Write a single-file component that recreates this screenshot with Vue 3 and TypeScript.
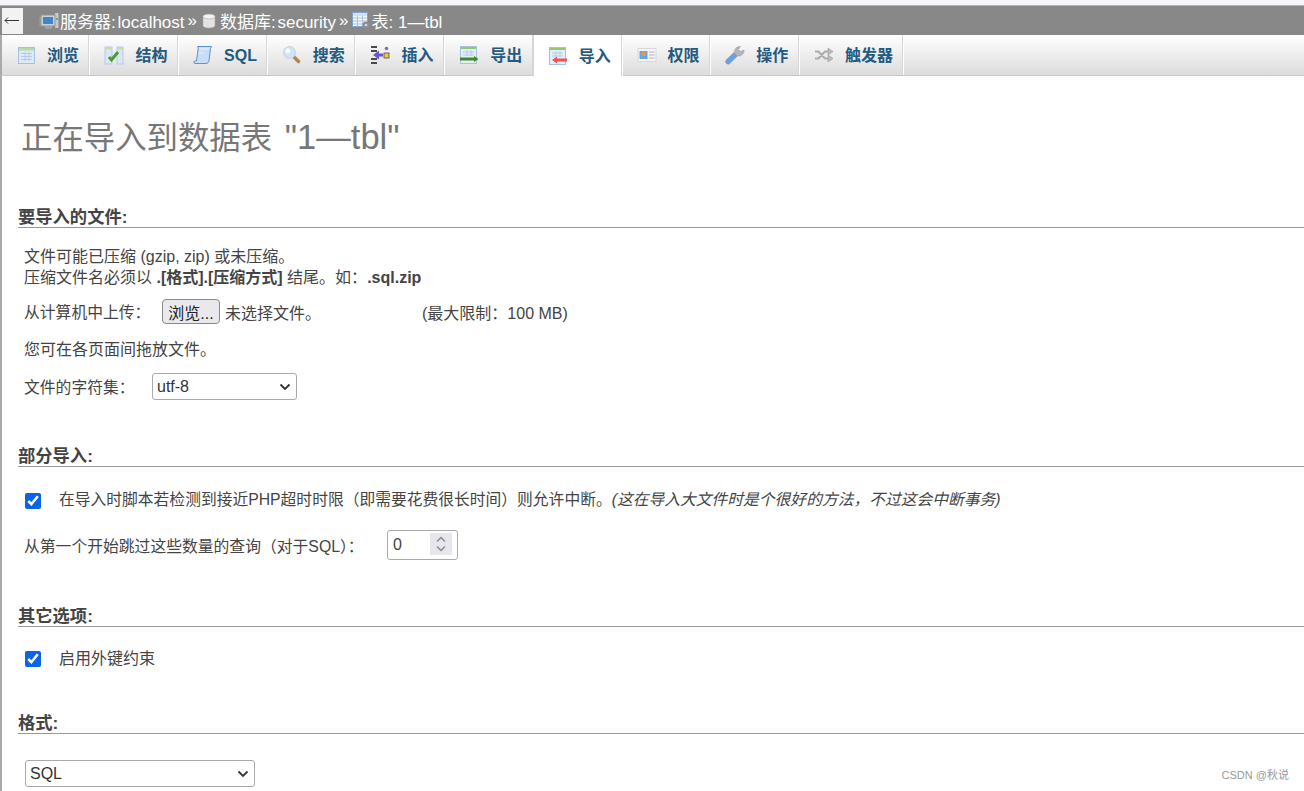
<script setup lang="ts">
interface Tab { label: string; icon: string; active?: boolean; wide?: boolean }
const tabs: Tab[] = [
  { label: '浏览', icon: 'browse' },
  { label: '结构', icon: 'structure' },
  { label: 'SQL', icon: 'sql' },
  { label: '搜索', icon: 'search' },
  { label: '插入', icon: 'insert' },
  { label: '导出', icon: 'export' },
  { label: '导入', icon: 'import', active: true },
  { label: '权限', icon: 'privs' },
  { label: '操作', icon: 'ops' },
  { label: '触发器', icon: 'triggers', wide: true },
]
</script>

<template>
  <div class="page">
    <div class="topbar">
      <button class="back" type="button" aria-label="back">
        <svg width="15" height="7" viewBox="0 0 15 7"><path d="M15 3.500H1M4 .5L1 3.500 4 6.500" fill="none" stroke="#333" /></svg>
      </button>
      <div class="crumbs">
        <svg class="c-ic server" width="20" height="18" viewBox="0 0 20 18">
          <rect x="0.5" y="5" width="3" height="9" fill="#9aa3ad" />
          <rect x="16" y="1" width="3.500" height="15" fill="#c4c8cc" />
          <rect x="2" y="3" width="14" height="11" fill="#c9d0d6" stroke="#8d959c" />
          <rect x="4" y="5" width="10" height="7" fill="#3f86c8" />
          <rect x="6" y="14" width="7" height="3" fill="#9aa3ad" />
          <rect x="17" y="6" width="2" height="2" fill="#5cb85c" />
        </svg>
        <span class="tight">服务器: localhost</span>
        <span class="sep">»</span>
        <svg class="c-ic db" width="14" height="16" viewBox="0 0 14 16">
          <path d="M1 3.500v9c0 1.500 2.600 2.500 6 2.500s6-1 6-2.500v-9z" fill="#e3e3e3" stroke="#aaa" stroke-width=".6" />
          <ellipse cx="7" cy="3.500" rx="6" ry="2.400" fill="#f4f4f4" stroke="#aaa" stroke-width=".6" />
        </svg>
        <span class="tight">数据库: security</span>
        <span class="sep">»</span>
        <svg class="c-ic tbl" width="19" height="18" viewBox="0 0 19 18">
          <rect x=".5" y=".5" width="15" height="14" fill="#f2f6fb" stroke="#7da4d0" />
          <path d="M1 6h14M1 9h14M1 12h14M5.500 4v10M10.500 4v10" stroke="#a9c1dc" />
          <rect x="1" y="1" width="14" height="3" fill="#cfe0f2" />
          <circle cx="14" cy="13" r="3.600" fill="#8d8d8d" />
          <circle cx="14" cy="13" r="1.300" fill="#d8d8d8" />
        </svg>
        <span>表: 1—tbl</span>
      </div>
    </div>

    <div class="tabs">
      <a v-for="t in tabs" :key="t.label" class="tab" :class="{ active: t.active, wide: t.wide }">
        <svg class="tab-ic" width="20" height="20" viewBox="0 0 20 20">
          <template v-if="t.icon === 'browse'">
            <rect x="1.500" y="2.500" width="16" height="16" fill="#dfeaf7" stroke="#a5c1e2" />
            <rect x="2" y="3" width="15" height="2.500" fill="#b5dba0" />
            <path d="M4 8.500h11M4 11.500h11M4 14.500h11M8 7v9M12 7v9" stroke="#b4cbe6" />
          </template>
          <template v-else-if="t.icon === 'structure'">
            <rect x="1" y="2" width="7" height="17" fill="#d9e6f5" stroke="#b4cbe6" />
            <rect x="13" y="2" width="6" height="17" fill="#d9e6f5" stroke="#b4cbe6" />
            <rect x="1" y="2" width="7" height="2.500" fill="#bfe0a8" />
            <rect x="13" y="2" width="6" height="2.500" fill="#bfe0a8" />
            <path d="M5 12l2.500 3L14 7" fill="none" stroke="#4f9a33" stroke-width="3" />
          </template>
          <template v-else-if="t.icon === 'sql'">
            <path d="M4.500 1.500H18.500L17.500 3.500 16 15.500C15.700 17.500 14.500 18.500 13 18.500H2C.8 18.500 .2 17 1.500 16H3.500L5 5C5.200 3.500 5.200 2.500 4.500 1.500Z" fill="#c9def6" stroke="#5a94d2" />
            <path d="M6.500 4h9M5.500 8h5" stroke="#eaf3fd" />
          </template>
          <template v-else-if="t.icon === 'search'">
            <path d="M11.500 11.500l5 5" stroke="#bb8250" stroke-width="3.600" stroke-linecap="round" />
            <circle cx="7.500" cy="7.500" r="6" fill="#cfe3f8" stroke="#c5d3e0" />
            <circle cx="5.800" cy="5.800" r="2.600" fill="#f3f9ff" />
          </template>
          <template v-else-if="t.icon === 'insert'">
            <path d="M1 1h6v2H1zM1 5h6v2H1zM1 13h6v2H1zM1 17h6v2H1z" fill="#4a4a4a" />
            <path d="M3 10l6-4.500V8.500h4v3H9v3z" fill="#6b57d6" />
            <rect x="14" y="8" width="5" height="5" fill="#f4c93f" stroke="#4a4a4a" stroke-width=".8" />
            <circle cx="16.500" cy="3.500" r="1.800" fill="#7a6ad0" />
          </template>
          <template v-else-if="t.icon === 'export'">
            <rect x="1.500" y="1.500" width="16" height="17" fill="#e6eff9" stroke="#a5c1e2" />
            <rect x="2" y="2" width="15" height="2" fill="#8fcb6e" />
            <path d="M4 7h11M4 10h11M8 5v6M12 5v6" stroke="#b4cbe6" />
            <path d="M1 12.500h14V11l4.500 3-4.500 3v-1.500H1z" fill="#3f8a2e" />
          </template>
          <template v-else-if="t.icon === 'import'">
            <rect x="1.500" y="1.500" width="16" height="17" fill="#e6eff9" stroke="#a5c1e2" />
            <rect x="2" y="2" width="15" height="2" fill="#8fcb6e" />
            <path d="M4 7h11M4 10h11M8 5v6M12 5v6" stroke="#b4cbe6" />
            <path d="M19 12.500H9V10.500l-5 3.500 5 3.500v-2h10z" fill="#f0504f" />
          </template>
          <template v-else-if="t.icon === 'privs'">
            <rect x="1" y="3.500" width="18" height="13" fill="#f6f6f6" stroke="#d8d8d8" />
            <rect x="2.500" y="6" width="8" height="8" fill="#6aa5dc" />
            <circle cx="6.500" cy="9" r="2.200" fill="#e09a5c" />
            <path d="M12 7h5.500M12 10h5.500M12 13h5.500" stroke="#a8b4c0" />
          </template>
          <template v-else-if="t.icon === 'ops'">
            <path d="M2 18.800c-1.500-.8-1.800-2.500-.8-3.800L9 7.500l3.500 3.500L4.500 18.800c-.8.500-1.700.500-2.500 0z" fill="#6f9fdd" stroke="#5f8cc8" stroke-width=".5" />
            <path d="M9.500 8C9 4 12 1 15.500 1.500L13.500 4.500 15.500 6.500 19 5c.5 3.500-2.500 6.500-6.500 6z" fill="#b5b5b5" stroke="#999" stroke-width=".5" />
          </template>
          <template v-else>
            <path d="M1 6.500h3.500L11 13.500h3M1 13.500h3.500L11 6.500h3" fill="none" stroke="#adadad" stroke-width="2.200" />
            <path d="M14 3l5 3.500-5 3.500zM14 10l5 3.500-5 3.500z" fill="#bdbdbd" stroke="#999" stroke-width=".6" />
          </template>
        </svg>
        <span class="tab-label">{{ t.label }}</span>
      </a>
    </div>

    <main class="content">
      <h2 class="title">正在导入到数据表 <span class="title-latin">"1—tbl"</span></h2>

      <section class="sec sec-file">
        <h3 class="sec-h">要导入的文件:</h3>
        <div class="body">
          <p class="note">文件可能已压缩 (gzip, zip) 或未压缩。<br />压缩文件名必须以 <b>.[格式].[压缩方式]</b> 结尾。如&#xFF1A;<b>.sql.zip</b></p>
          <div class="row upload">
            <label class="lbl-upload">从计算机中上传&#xFF1A;</label>
            <button class="browse" type="button">浏览...</button>
            <span class="nofile">未选择文件。</span>
            <span class="limit">(最大限制&#xFF1A;100 MB)</span>
          </div>
          <p class="drop">您可在各页面间拖放文件。</p>
          <div class="row charset-row">
            <label class="lbl-charset">文件的字符集&#xFF1A;</label>
            <select class="sel charset"><option>utf-8</option></select>
          </div>
        </div>
      </section>

      <section class="sec sec-partial">
        <h3 class="sec-h">部分导入:</h3>
        <div class="body">
          <div class="row check first">
            <input type="checkbox" checked />
            <span>在导入时脚本若检测到接近PHP超时时限&#xFF08;即需要花费很长时间&#xFF09;则允许中断。<i>(这在导入大文件时是个很好的方法&#xFF0C;不过这会中断事务)</i></span>
          </div>
          <div class="row skip">
            <label class="lbl-skip">从第一个开始跳过这些数量的查询&#xFF08;对于SQL&#xFF09;&#xFF1A;</label>
            <div class="num-wrap">
              <input class="num" type="number" value="0" />
              <span class="spin">
                <svg width="12" height="18" viewBox="0 0 12 18"><path d="M2 6.500L6 2.500l4 4M2 11.500l4 4 4-4" fill="none" stroke="#8a8a94" stroke-width="1.500" /></svg>
              </span>
            </div>
          </div>
        </div>
      </section>

      <section class="sec sec-other">
        <h3 class="sec-h">其它选项:</h3>
        <div class="body">
          <div class="row check">
            <input class="flat" type="checkbox" checked />
            <span class="fk">启用外键约束</span>
          </div>
        </div>
      </section>

      <section class="sec sec-format">
        <h3 class="sec-h">格式:</h3>
        <div class="body">
          <select class="sel format"><option>SQL</option></select>
        </div>
      </section>
    </main>

    <div class="watermark">CSDN @秋说</div>
  </div>
</template>

<style>
html, body { margin: 0; padding: 0; overflow: hidden; background: #fff; }
</style>

<style scoped>
.page {
  height: 791px;
  overflow: hidden;
  box-sizing: border-box;
  position: relative;
  padding-top: 5px;
  background: #f6f6fa;
  font-family: "Liberation Sans", "Noto Sans CJK SC", sans-serif;
  font-size: 16px;
  color: #444;
}
.topbar {
  height: 30px;
  box-sizing: border-box;
  border-top: 1px solid #b5b5b5;
  background: #888;
  display: flex;
  align-items: center;
  padding-left: 2px;
  color: #fff;
}
.back {
  width: 21px;
  height: 26px;
  padding: 0 0 0 2px;
  display: flex;
  align-items: center;
  border: none;
  background: #f2f2f2;
}
.crumbs {
  margin-left: 16px;
  display: flex;
  align-items: center;
  font-size: 17px;
  white-space: nowrap;
}
.tight { word-spacing: -3px; }
.c-ic { margin-right: 1px; flex: none; }
.c-ic.db { margin-left: 2px; margin-right: 4px; }
.sep { margin: 0 3px 0 3px; }
.tabs {
  height: 41px;
  box-sizing: border-box;
  display: flex;
  border-left: 2px solid #aaa;
  background: linear-gradient(#fff, #dcdcdc);
  border-bottom: 1px solid #c8c8c8;
}
.tab {
  width: 88.700px;
  flex: none;
  box-sizing: border-box;
  display: flex;
  align-items: center;
  padding-left: 14px;
  border-right: 1px solid #fff;
  box-shadow: inset -1px 0 0 #d6d6d6;
  height: 40px;
  background: linear-gradient(#fff, #dcdcdc);
}
.tab:first-child { width: 88.400px; padding-left: 15px; }
.tab.wide { width: 104px; }
.tab.active { background: #fff; height: 41px; box-shadow: -1px 0 0 #d6d6d6, inset -1px 0 0 #d6d6d6; }
.tab-ic { flex: none; margin-right: 11px; }
.tab:first-child .tab-ic { margin-right: 10px; }
.tab-label { font-weight: 700; color: #235a81; font-size: 16px; line-height: 22px; white-space: nowrap; padding-top: 2px; }
.content {
  background: #fff;
  border-left: 2px solid #aaa;
  height: 716px;
  box-sizing: border-box;
  padding: 1px 0 0 16px;
}
.title {
  margin: 37px 0 0 3px;
  height: 46px;
  font-size: 31.400px;
  line-height: 46px;
  font-weight: 400;
  color: #777;
}
.title-latin { font-size: 34.500px; margin-left: 4px; }
.sec-h {
  margin: 0;
  height: 20px;
  line-height: 20px;
  font-size: 17.300px;
  font-weight: 700;
  color: #444;
  border-bottom: 1px solid #999;
}
.sec-file { margin-top: 47px; }
.sec-partial { margin-top: 46px; }
.sec-other { margin-top: 46px; }
.sec-format { margin-top: 43px; }
.body { padding-left: 6px; }
.note { margin: 18px 0 0; line-height: 21px; }
.note b { color: #444; }
.row { display: flex; align-items: center; }
.upload { margin-top: 11px; height: 25px; }
.lbl-upload { width: 138px; flex: none; font-size: 15.800px; }
.browse {
  width: 58px;
  height: 25px;
  padding: 0;
  flex: none;
  border: 1px solid #8a8a8a;
  border-radius: 4px;
  background: #e9e9ed;
  color: #222;
  font: 16px "Liberation Sans", "Noto Sans CJK SC", sans-serif;
}
.nofile { margin-left: 5px; width: 197px; flex: none; }
.drop { margin: 14px 0 0; line-height: 24px; }
.charset-row { margin-top: 11px; height: 27px; }
.lbl-charset { width: 128px; flex: none; font-size: 15.800px; }
.sel {
  height: 27px;
  box-sizing: border-box;
  appearance: none;
  padding: 0 20px 0 4px;
  background: #fff url("data:image/svg+xml,%3Csvg xmlns='http://www.w3.org/2000/svg' width='12' height='8'%3E%3Cpath d='M1.500 1.500L6 6l4.500-4.500' fill='none' stroke='%23333' stroke-width='1.800'/%3E%3C/svg%3E") no-repeat right 5px center;
  color: #333;
  border: 1px solid #aaa;
  border-radius: 3px;
  font: 16px "Liberation Sans", "Noto Sans CJK SC", sans-serif;
}
.charset { width: 145px; }
.check { padding-left: 1px; }
.check input {
  width: 16px;
  height: 16px;
  margin: 6px 18px 0 0;
  accent-color: #0b63e5;
  flex: none;
}
.check input.flat { margin-top: 1px; }
.fk { margin-top: -2px; }
.first { margin-top: 19px; height: 24px; }
.first span { white-space: nowrap; font-size: 15.770px; }
.first i { color: #444; }
.skip { margin-top: 20px; height: 30px; }
.lbl-skip { width: 363px; flex: none; white-space: nowrap; font-size: 15.800px; }
.num-wrap { position: relative; width: 71px; height: 30px; }
.num {
  width: 71px;
  height: 30px;
  box-sizing: border-box;
  border: 1px solid #aaa;
  border-radius: 3px;
  padding: 0 5px;
  font: 16px "Liberation Sans", sans-serif;
  color: #444;
  appearance: textfield;
}
.num::-webkit-inner-spin-button { appearance: none; }
.spin {
  position: absolute;
  left: 43px;
  top: 3px;
  width: 22px;
  height: 22px;
  background: #e6e6ec;
  display: flex;
  align-items: center;
  justify-content: center;
}
.sec-other .check { margin-top: 19px; height: 24px; }
.format { width: 230px; margin: 26px 0 0 1px; display: block; }
.watermark {
  position: absolute;
  right: 15px;
  bottom: 9px;
  font-size: 11px;
  color: #999;
}
</style>
